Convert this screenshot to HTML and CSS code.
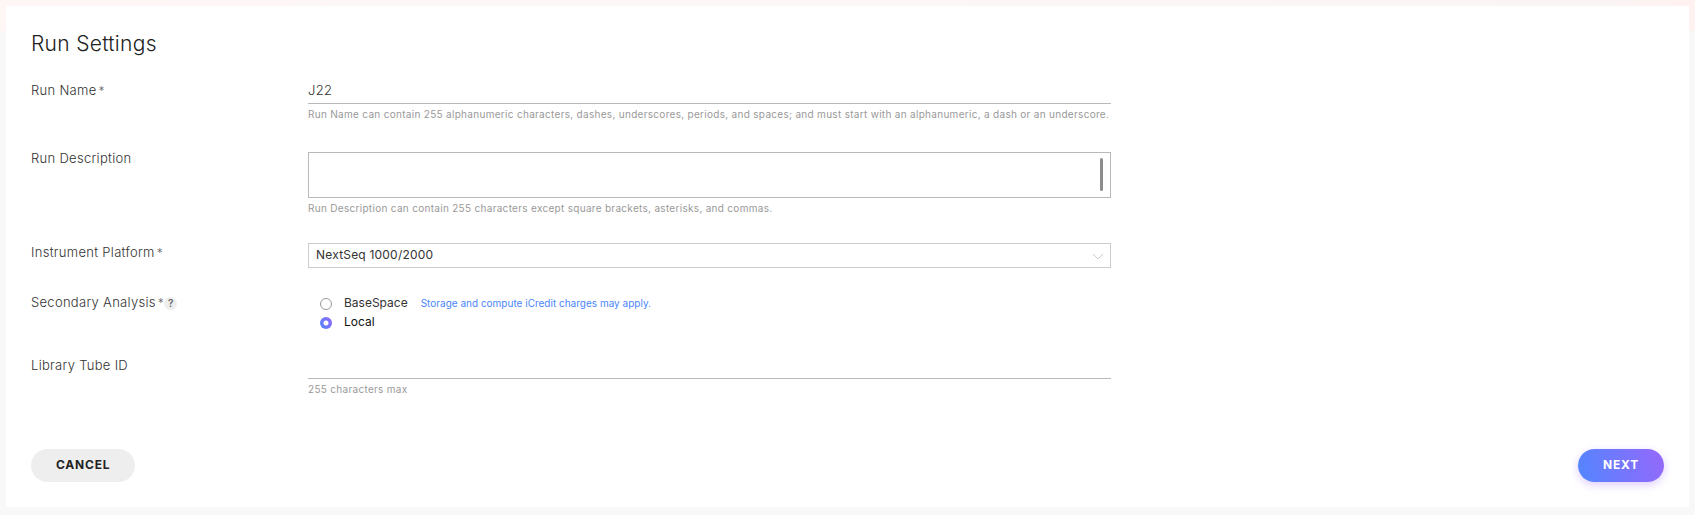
FILE: index.html
```html
<!DOCTYPE html>
<html lang="en">
<head>
<meta charset="utf-8">
<title>Run Settings</title>
<link rel="stylesheet" href="styles.css">
</head>
<body>
<main class="page">
  <form class="card">
    <h1 class="title">Run Settings</h1>
    <div class="rows">
      <div class="row">
        <label class="label" for="run-name">Run Name<span class="req">*</span></label>
        <div class="field">
          <input class="text-input" id="run-name" type="text" value="J22">
          <p class="hint">Run Name can contain 255 alphanumeric characters, dashes, underscores, periods, and spaces; and must start with an alphanumeric, a dash or an underscore.</p>
        </div>
      </div>
      <div class="row">
        <label class="label" for="run-desc">Run Description</label>
        <div class="field">
          <div class="area-wrap"><textarea class="area" id="run-desc"></textarea></div>
          <p class="hint">Run Description can contain 255 characters except square brackets, asterisks, and commas.</p>
        </div>
      </div>
      <div class="row">
        <label class="label" for="platform">Instrument Platform<span class="req">*</span></label>
        <div class="field">
          <select class="select" id="platform"><option>NextSeq 1000/2000</option></select>
          <svg class="chevron" viewBox="0 0 12 8" aria-hidden="true"><path d="M1 1 L6 6 L11 1"/></svg>
        </div>
      </div>
      <div class="row">
        <div class="label" id="analysis-label">Secondary Analysis<span class="req">*</span><button class="help" type="button" aria-label="Help">?</button></div>
        <div class="field radios" role="radiogroup" aria-labelledby="analysis-label">
          <div class="option">
            <input class="radio" type="radio" name="analysis" id="basespace">
            <label class="choice" for="basespace">BaseSpace</label>
            <span class="note">Storage and compute iCredit charges may apply.</span>
          </div>
          <div class="option">
            <input class="radio" type="radio" name="analysis" id="local" checked>
            <label class="choice chosen" for="local">Local</label>
          </div>
        </div>
      </div>
      <div class="row">
        <label class="label" for="tube">Library Tube ID</label>
        <div class="field">
          <input class="text-input" id="tube" type="text">
          <p class="hint">255 characters max</p>
        </div>
      </div>
    </div>
    <div class="actions">
      <button class="btn btn-cancel" type="button">CANCEL</button>
      <button class="btn btn-next" type="submit">NEXT</button>
    </div>
  </form>
</main>
</body>
</html>
```
FILE: styles.css
```css
* { box-sizing: border-box; }

body {
  margin: 0;
  background: #f8f8f8 linear-gradient(90deg, #fef7f6, #fcf6f6 50%, #fbf4f4 95%, #fff2f0) no-repeat top / 100% 31px;
  color: #333;
  font: 400 13px/20px Inter, "Liberation Sans", sans-serif;
}

button, input, textarea, select { font: inherit; color: inherit; }

.page { padding: 6px 6px 8px; }

.card {
  padding: 25px;
  background: #fff;
}

.title {
  margin: 0;
  color: #222;
  font-size: 21px;
  font-weight: 300;
  line-height: 26px;
  letter-spacing: 0.3px;
}

.rows {
  display: grid;
  gap: 25px;
  margin-top: 24px;
}

.row {
  display: grid;
  grid-template-columns: minmax(0, 277fr) minmax(0, 803fr) minmax(0, 553fr);
}

.label {
  font-weight: 300;
  line-height: 18px;
  letter-spacing: 0.3px;
}

.req {
  margin-left: 2px;
  color: #666;
  font-size: 12px;
}

.help {
  width: 13px;
  height: 13px;
  padding: 0;
  border: 0;
  border-radius: 50%;
  background: #eee;
  color: #666;
  font-size: 10px;
  font-weight: 600;
  line-height: 13px;
}

.field { position: relative; }

.text-input {
  display: block;
  width: 100%;
  height: 23px;
  padding: 0 0 4px;
  border: 0;
  border-bottom: 1px solid #b9b9b9;
  background: none;
  font-weight: 300;
  letter-spacing: 0.3px;
}

.hint {
  margin: 4px 0;
  color: #999;
  font-size: 10px;
  line-height: 12px;
  letter-spacing: 0.3px;
}

.area-wrap {
  position: relative;
  margin-top: 3px;
}

.area-wrap::after {
  content: "";
  position: absolute;
  top: 6px;
  right: 8px;
  bottom: 7px;
  width: 3px;
  border-radius: 2px;
  background: #8c8c8c;
}

.area {
  display: block;
  width: 100%;
  height: 46px;
  border: 1px solid #b9b9b9;
  resize: none;
}

.select {
  display: block;
  width: 100%;
  height: 25px;
  padding: 0 24px 2px 7px;
  border: 1px solid #ccc;
  border-radius: 0;
  background: #fff;
  appearance: none;
  font-size: 12px;
  letter-spacing: 0.2px;
}

.chevron {
  position: absolute;
  top: 10px;
  right: 7px;
  width: 12px;
  height: 8px;
  fill: none;
  stroke: #ccc;
  pointer-events: none;
}

.radios { padding-left: 12px; }

.option {
  display: flex;
  align-items: center;
  height: 19px;
}

.radio {
  width: 12px;
  height: 12px;
  margin: 2px 12px 0 0;
  border: 1px solid #999;
  border-radius: 50%;
  background: #fff;
  appearance: none;
}

.radio:checked {
  border: 0;
  background: radial-gradient(circle, #fff 2px, transparent 3px), linear-gradient(60deg, #5286ff, #9268fb);
}

.choice { font-size: 12px; }

.chosen { color: #111; }

.note {
  margin-left: 13px;
  color: #4a86fb;
  font-size: 10px;
}

.actions {
  display: flex;
  justify-content: space-between;
  margin-top: 50px;
}

.btn {
  height: 33px;
  padding: 0 25px 2px;
  border: 0;
  border-radius: 17px;
  font-size: 12px;
  font-weight: 700;
  letter-spacing: 0.8px;
}

.btn-cancel {
  background: #eee;
  color: #222;
}

.btn-next {
  background: linear-gradient(75deg, #5286ff, #9668fb);
  box-shadow: 0 3px 8px rgba(150, 90, 250, 0.3);
  color: #fff;
}
```
